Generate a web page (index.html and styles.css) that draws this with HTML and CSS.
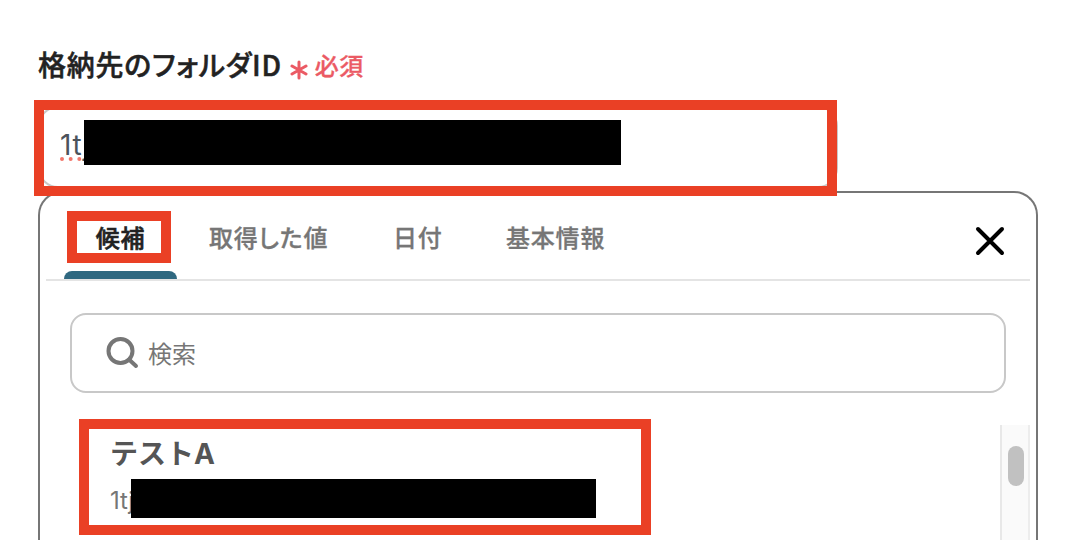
FILE: index.html
```html
<!DOCTYPE html>
<html lang="ja">

<head>
    <meta charset="UTF-8">
    <meta name="viewport" content="width=device-width, initial-scale=1.0">
    <title>格納先のフォルダID</title>
    <link rel="stylesheet" href="styles.css">
</head>

<body>

    <div class="field">
        <div class="field-label">
            <span class="label-text">格納先のフォルダID</span>
            <svg class="required-icon" width="18" height="20" viewBox="0 0 18 20">
                <path d="M9 2V18M2 6L16 14M16 6L2 14"/>
            </svg>
            <span class="required-text">必須</span>
        </div>

        <div class="field-input">
            <span class="field-value">1tj</span>
            <span class="mask mask-input"></span>
            <span class="mark mark-input"></span>
        </div>

        <div class="panel">
            <div class="tabs">
                <div class="tab active">候補<span class="mark mark-tab"></span></div>
                <div class="tab tab-value">取得した値</div>
                <div class="tab tab-date">日付</div>
                <div class="tab tab-info">基本情報</div>
                <svg class="close" width="30" height="30" viewBox="0 0 30 30">
                    <path d="M3 3L27 27M27 3L3 27"/>
                </svg>
            </div>

            <div class="search">
                <svg class="search-icon" width="34" height="34" viewBox="0 0 34 34">
                    <circle cx="14.5" cy="15" r="12"/>
                    <path d="M23 23.5L30 30"/>
                </svg>
                <span class="search-text">検索</span>
            </div>

            <div class="results">
                <div class="result">
                    <div class="result-title">テストA</div>
                    <div class="result-id">1tj</div>
                    <span class="mask mask-result"></span>
                    <span class="mark mark-result"></span>
                </div>
                <div class="scrollbar">
                    <div class="scrollbar-thumb"></div>
                </div>
            </div>
        </div>
    </div>

</body>

</html>
```

FILE: styles.css
```css
* {
    box-sizing: border-box;
}

body {
    font-family: Inter, "Noto Sans CJK JP", sans-serif;
    font-feature-settings: "palt";
    background-color: #fff;
    margin: 0;
}

.field {
    width: 1000px;
    height: 540px;
    margin-left: 38px;
    padding-top: 44px;
}

.field-label {
    display: flex;
    align-items: center;
    height: 40px;
    margin-bottom: 22px;
}

.label-text {
    font-family: "Noto Sans CJK JP", sans-serif;
    font-size: 28px;
    font-weight: 500;
    letter-spacing: 0.75px;
    color: #222;
    -webkit-text-stroke: 0.5px #222;
}

.required-icon {
    margin: 11px 7px 0 8px;
    fill: none;
    stroke: #eb5a64;
    stroke-width: 3;
    stroke-linecap: round;
}

.required-text {
    font-size: 24px;
    font-weight: 500;
    letter-spacing: 0.4px;
    color: #eb5a64;
    -webkit-text-stroke: 0.3px #eb5a64;
}

.field-input {
    position: relative;
    width: 800px;
    height: 82px;
    padding: 20px 20px;
    border: 2px solid #c8c8c8;
    border-radius: 20px;
    z-index: 1;
}

.field-value {
    font-size: 28px;
    line-height: 34px;
    letter-spacing: 0.7px;
    color: #4b535c;
    text-decoration: underline dotted #f2766b 4px;
    text-underline-offset: 2px;
    text-decoration-skip-ink: none;
}

/* blacked-out ids */
.mask {
    position: absolute;
    background-color: #000;
}

.mask-input {
    left: 44px;
    top: 12px;
    width: 537px;
    height: 45px;
}

.mask-result {
    left: 91px;
    top: 54px;
    width: 465px;
    height: 39px;
}

/* red frames */
.mark {
    position: absolute;
    border: 10px solid #ea4025;
}

.mark-input {
    left: -6px;
    top: -8px;
    width: 803px;
    height: 96px;
}

.mark-tab {
    left: 3px;
    top: 12px;
    width: 104px;
    height: 52px;
}

.mark-result {
    left: 39px;
    top: -6px;
    width: 572px;
    height: 116px;
}

/* the panel goes on below the fold */
.panel {
    height: 349px;
    margin-top: 3px;
    border: 2px solid #767676;
    border-bottom: 0;
    border-radius: 24px 24px 0 0;
}

.tabs {
    display: flex;
    height: 88px;
    margin: 0 6px;
    padding-top: 6px;
    padding-left: 18px;
    border-bottom: 2px solid #e4e4e4;
}

.tab {
    height: 80px;
    font-size: 24px;
    font-weight: 500;
    line-height: 80px;
    letter-spacing: 0.8px;
    color: #767676;
    -webkit-text-stroke: 0.3px #767676;
}

.tab.active {
    position: relative;
    width: 113px;
    text-align: center;
    color: #222;
    -webkit-text-stroke: 0.6px #222;
}

.tab.active::after {
    content: "";
    position: absolute;
    left: 0;
    bottom: 0;
    width: 113px;
    height: 8px;
    background-color: #2f6880;
    border-radius: 8px 8px 0 0;
}

.tab-value {
    width: 184px;
    padding-left: 32px;
}

.tab-date {
    width: 113px;
    padding-left: 32px;
}

.tab-info {
    padding-left: 32px;
}

.close {
    margin: 27px 25px 0 auto;
    fill: none;
    stroke: #000;
    stroke-width: 4;
    stroke-linecap: round;
}

.search {
    display: flex;
    align-items: center;
    height: 80px;
    margin: 32px 30px;
    padding-left: 34px;
    border: 2px solid #c8c8c8;
    border-radius: 16px;
}

.search-icon {
    fill: none;
    stroke: #767676;
    stroke-width: 4;
    stroke-linecap: round;
}

.search-text {
    margin: 0 0 2px 8px;
    font-size: 24px;
    color: #767676;
}

.results {
    display: flex;
    justify-content: space-between;
    height: 115px;
    padding-right: 6px;
}

.result {
    position: relative;
    width: 620px;
    height: 110px;
    padding: 9px 0 0 70px;
}

.result-title {
    font-feature-settings: normal;
    font-size: 28px;
    font-weight: 700;
    line-height: 40px;
    color: #555;
}

.result-id {
    margin-top: 9px;
    font-size: 24px;
    line-height: 36px;
    color: #767676;
}

.scrollbar {
    width: 30px;
    padding: 21px 6px;
    background-color: #fafafa;
    border-left: 2px solid #e8e8e8;
    border-right: 2px solid #ededed;
}

.scrollbar-thumb {
    width: 16px;
    height: 40px;
    background-color: #c1c1c1;
    border-radius: 8px;
}
```
